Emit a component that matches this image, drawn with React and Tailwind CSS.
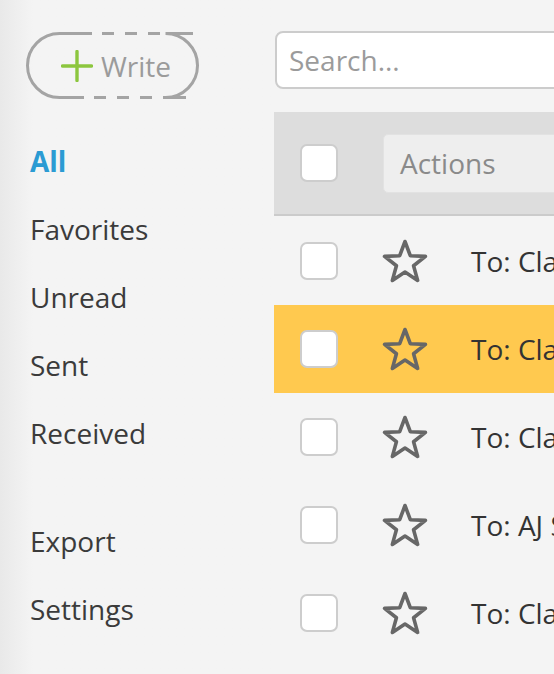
const navTop = ['Favorites', 'Unread', 'Sent', 'Received']
const navBottom = ['Export', 'Settings']

const messages = [
  { id: 1, to: 'Claire Mitchell', active: false },
  { id: 2, to: 'Claire Mitchell', active: true },
  { id: 3, to: 'Claire Mitchell', active: false },
  { id: 4, to: 'AJ Sanders', active: false },
  { id: 5, to: 'Claire Mitchell', active: false },
]

const Star = () => (
  <svg width="48" height="46" viewBox="0 0 48 46" className="shrink-0">
    <polygon
      points="24,3.5 29.29,17.72 44.45,18.36 32.56,27.78 36.64,42.39 24,34 11.36,42.39 15.44,27.78 3.55,18.36 18.71,17.72"
      fill="none"
      stroke="#676767"
      strokeWidth="3.6"
      strokeLinejoin="round"
    />
  </svg>
)

const Checkbox = () => (
  <div className="h-[38px] w-[38px] shrink-0 rounded-[7px] border-2 border-[#cdcdcd] bg-white" />
)

export default function App() {
  return (
    <div className="flex h-[674px] w-[554px] overflow-hidden bg-[#f4f4f4] font-['Open_Sans',sans-serif] text-[28px]">
      {/* Sidebar */}
      <aside className="w-[274px] shrink-0 bg-gradient-to-r from-[#e9e9e9] via-[#f4f4f4] via-12% to-[#f4f4f4] pl-[26px] pt-[32px]">
        <button className="relative flex h-[67px] w-[173px] items-center gap-[8px] pl-[35px]">
          {/* dashed pill outline, solid round ends */}
          <svg className="absolute inset-0" width="173" height="67" viewBox="0 0 173 67" fill="none" stroke="#a4a4a4" strokeWidth="3">
            <path d="M66 1.5H33.5A32 32 0 0 0 33.5 65.5H58" />
            <path d="M167 1.5H139.5A32 32 0 0 1 139.5 65.5H160" />
            <path d="M76 1.5H157" strokeDasharray="12 11" />
            <path d="M68 65.5H150" strokeDasharray="12 11" />
          </svg>
          <svg width="32" height="32" viewBox="0 0 32 32" className="shrink-0">
            <path d="M16 1.5V30.5M1.5 16H30.5" stroke="#8cc63e" strokeWidth="3.4" strokeLinecap="round" />
          </svg>
          <span className="leading-none text-[#9b9b9b]">Write</span>
        </button>

        <nav className="mt-[28px] pl-[4px]">
          <div className="h-[68px] font-bold leading-[68px] text-[#2b9bd3]">All</div>
          {navTop.map((item) => (
            <div key={item} className="h-[68px] leading-[68px] text-[#3b3b3b]">{item}</div>
          ))}
          <div className="mt-[40px]">
            {navBottom.map((item) => (
              <div key={item} className="h-[68px] leading-[68px] text-[#3b3b3b]">{item}</div>
            ))}
          </div>
        </nav>
      </aside>

      {/* Main */}
      <main className="min-w-0 flex-1 overflow-hidden">
        <div className="pl-[1px] pt-[31px]">
          <div className="flex h-[58px] w-[420px] items-center rounded-[8px] border-2 border-[#cccccc] bg-white pl-[12px] text-[#9b9b9b]">
            Search...
          </div>
        </div>

        {/* Header */}
        <div className="mt-[23px] flex h-[104px] w-[420px] items-center border-b-2 border-[#cbcbcb] bg-[#dddddd] pl-[26px]">
          <Checkbox />
          <div className="ml-[45px] flex h-[59px] w-[300px] items-center rounded-[5px] border border-[#e2e2e2] bg-[#eeeeee] pl-[16px] text-[#8a8a8a]">
            Actions
          </div>
        </div>

        {/* Rows */}
        <div className="mt-[1px]">
          {messages.map((m) => (
            <div
              key={m.id}
              className={`flex h-[88px] w-[420px] items-center pl-[26px] ${m.active ? 'bg-[#ffc94f]' : ''}`}
            >
              <Checkbox />
              <div className="ml-[43px]">
                <Star />
              </div>
              <span className="ml-[42px] whitespace-nowrap text-[#333333]">To: {m.to}</span>
            </div>
          ))}
        </div>
      </main>
    </div>
  )
}
